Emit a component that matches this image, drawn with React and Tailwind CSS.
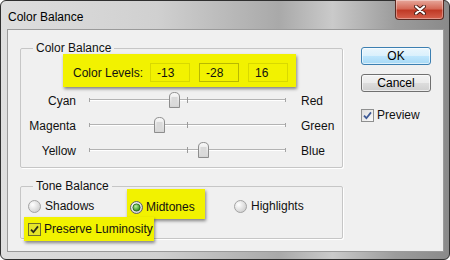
import React from "react";

const levels = [-13, -28, 16];

const sliders = [
  { left: "Cyan", right: "Red", value: -13 },
  { left: "Magenta", right: "Green", value: -28 },
  { left: "Yellow", right: "Blue", value: 16 },
];

const Radio = ({ checked }) => (
  <svg width="13" height="13" viewBox="0 0 13 13" className="shrink-0">
    <defs>
      <radialGradient id="radioBg" cx="35%" cy="35%" r="70%">
        <stop offset="0%" stopColor="#ffffff" />
        <stop offset="100%" stopColor="#cfcfcf" />
      </radialGradient>
      <radialGradient id="radioDot" cx="40%" cy="35%" r="65%">
        <stop offset="0%" stopColor="#b8f09c" />
        <stop offset="100%" stopColor="#2c8a1c" />
      </radialGradient>
    </defs>
    <circle cx="6.5" cy="6.5" r="6" fill="url(#radioBg)" stroke={checked ? "#5f5f5f" : "#a3a3a3"} />
    {checked && <circle cx="6.5" cy="6.5" r="3.6" fill="url(#radioDot)" stroke="#1f5a14" strokeWidth="0.8" />}
  </svg>
);

const Check = ({ yellow }) => (
  <svg width="13" height="13" viewBox="0 0 13 13" className="shrink-0">
    <defs>
      <linearGradient id="chkBg" x1="0" y1="0" x2="1" y2="1">
        <stop offset="0%" stopColor="#dcdcdc" />
        <stop offset="100%" stopColor="#fbfbfb" />
      </linearGradient>
    </defs>
    <rect x="0.5" y="0.5" width="12" height="12" fill={yellow ? "#e4e42a" : "url(#chkBg)"} stroke={yellow ? "#6f6f2a" : "#8e8f8f"} />
    <path
      d="M3 6.6 L5.4 9.2 L10 3.4"
      fill="none"
      stroke={yellow ? "#2b2b18" : "#3e5a96"}
      strokeWidth="1.8"
    />
  </svg>
);

const Thumb = () => (
  <svg width="11" height="16" viewBox="0 0 11 16">
    <defs>
      <linearGradient id="thumbBg" x1="0" y1="0" x2="0" y2="1">
        <stop offset="0%" stopColor="#fbfbfb" />
        <stop offset="100%" stopColor="#d2d2d2" />
      </linearGradient>
    </defs>
    <path d="M0.5 15.5 V5 Q0.5 0.5 5.5 0.5 Q10.5 0.5 10.5 5 V15.5 Z" fill="url(#thumbBg)" stroke="#8d8d8d" />
    <rect x="2.5" y="5" width="6" height="8.5" fill="#dadada" />
  </svg>
);

const Slider = ({ left, right, value }) => {
  // track is 197px wide, centre at 98.5
  const centre = 98.5 + (value / 100) * 98.5;
  return (
    <div className="flex items-center h-[25px]">
      <span className="w-[55px] text-right">{left}</span>
      <div className="relative ml-[13px] w-[197px] h-[25px]">
        <div className="absolute left-0 right-0 top-[11px] h-[2px] border-t border-[#b3b3b3] bg-white" />
        <div className="absolute left-0 top-[10px] w-px h-[4px] bg-[#a5a5a5]" />
        <div className="absolute left-[98px] top-[9px] w-px h-[6px] bg-[#9a9a9a]" />
        <div className="absolute right-0 top-[10px] w-px h-[4px] bg-[#a5a5a5]" />
        <div className="absolute top-[4px]" style={{ left: `${centre - 5.5}px` }}>
          <Thumb />
        </div>
      </div>
      <span className="ml-[15px]">{right}</span>
    </div>
  );
};

const App = () => {
  return (
    <div className="w-[450px] h-[260px] bg-white font-['Liberation_Sans',Arial,sans-serif] text-[12px] leading-[14px] text-[#111]">
      <div className="w-[450px] h-[260px] flex flex-col rounded-[6px] border border-[#2f2f2f] bg-[linear-gradient(90deg,#dedede_0%,#d0d0d0_35%,#a9a9a9_62%,#cacaca_74%,#9c9c9c_88%,#8a8a8a_100%)] pl-[6px] pr-[5px] pb-[7px]">
        <div className="h-[28px] flex items-start justify-between">
          <span className="pl-[1px] pt-[9px] text-[12px] text-black">Color Balance</span>
          <div className="-mt-px w-[49px] h-[20px] flex items-center justify-center rounded-b-[4px] border border-t-0 border-[#5a2a22] bg-[linear-gradient(#e7a89c_0%,#d56a58_45%,#c03a26_55%,#d5614d_100%)] shadow-[inset_0_0_0_1px_rgba(255,255,255,0.35)]">
            <svg width="12" height="10" viewBox="0 0 12 10">
              <path d="M2 1.5 L10 8.5 M10 1.5 L2 8.5" stroke="#4a1d16" strokeWidth="4" strokeLinecap="round" />
              <path d="M2 1.5 L10 8.5 M10 1.5 L2 8.5" stroke="#ffffff" strokeWidth="2.2" strokeLinecap="round" />
            </svg>
          </div>
        </div>

        <div className="flex-1 flex bg-[#f0f0f0] border border-[#9a9a9a] pl-[12px]">
          <div className="w-[323px] flex flex-col">
            <fieldset className="mt-[11px] h-[127px] border border-[#c6c6c6] rounded-[2px] shadow-[1px_1px_0_#ffffff]">
              <legend className="ml-[12px] px-[3px] leading-[14px]">Color Balance</legend>
              <div className="-mt-px ml-[42px] w-[233px] h-[33px] flex items-start pt-[9px] pl-[10px] bg-[#f2f200] shadow-[1px_2px_3px_rgba(0,0,0,0.45)]">
                <span className="w-[77px] pt-[3px]">Color Levels:</span>
                <div className="flex gap-[9px]">
                  {levels.map((v, i) => (
                    <div
                      key={i}
                      className={`w-[40px] h-[19px] flex items-center pl-[6px] bg-[#f2f200] border ${
                        i === 1 ? "border-[#b9b900]" : "border-[#d9d900]"
                      }`}
                    >
                      {v}
                    </div>
                  ))}
                </div>
              </div>
              <div className="mt-px flex flex-col">
                {sliders.map((s) => (
                  <Slider key={s.left} {...s} />
                ))}
              </div>
            </fieldset>

            <fieldset className="mt-[11px] h-[60px] border border-[#c6c6c6] rounded-[2px] shadow-[1px_1px_0_#ffffff]">
              <legend className="ml-[12px] px-[3px] leading-[14px]">Tone Balance</legend>
              <div className="flex h-[26px]">
                <div className="w-[106px] pl-[7px] flex items-center gap-[4px]">
                  <Radio />
                  <span>Shadows</span>
                </div>
                <div className="self-end w-[78px] h-[30px] shrink-0 flex items-center gap-[3px] pl-[3px] pt-[6px] bg-[#f2f200] shadow-[1px_2px_3px_rgba(0,0,0,0.45)]">
                  <Radio checked />
                  <span>Midtones</span>
                </div>
                <div className="ml-[29px] flex items-center gap-[4px]">
                  <Radio />
                  <span>Highlights</span>
                </div>
              </div>
              <div className="relative z-10 -mt-[2px] ml-[3px] w-[130px] h-[24px] flex items-center gap-[3px] pl-[4px] bg-[#f2f200] shadow-[1px_2px_3px_rgba(0,0,0,0.45)]">
                <Check yellow />
                <span>Preserve Luminosity</span>
              </div>
            </fieldset>
          </div>

          <div className="ml-[18px] w-[70px] flex flex-col">
            <button className="mt-[17px] h-[18px] rounded-[3px] border border-[#3c7fb1] bg-[linear-gradient(#eaf6fd_0%,#d9f0fc_50%,#bee6fd_50%,#a7d9f5_100%)] shadow-[inset_0_0_0_1px_rgba(255,255,255,0.6)] leading-[14px] text-black">
              OK
            </button>
            <button className="mt-[9px] h-[18px] rounded-[3px] border border-[#707070] bg-[linear-gradient(#f2f2f2_0%,#ebebeb_50%,#dddddd_50%,#cfcfcf_100%)] shadow-[inset_0_0_0_1px_rgba(255,255,255,0.6)] leading-[14px] text-black">
              Cancel
            </button>
            <div className="mt-[16px] flex items-center gap-[3px]">
              <Check />
              <span>Preview</span>
            </div>
          </div>
        </div>
      </div>
    </div>
  );
};

export default App;
